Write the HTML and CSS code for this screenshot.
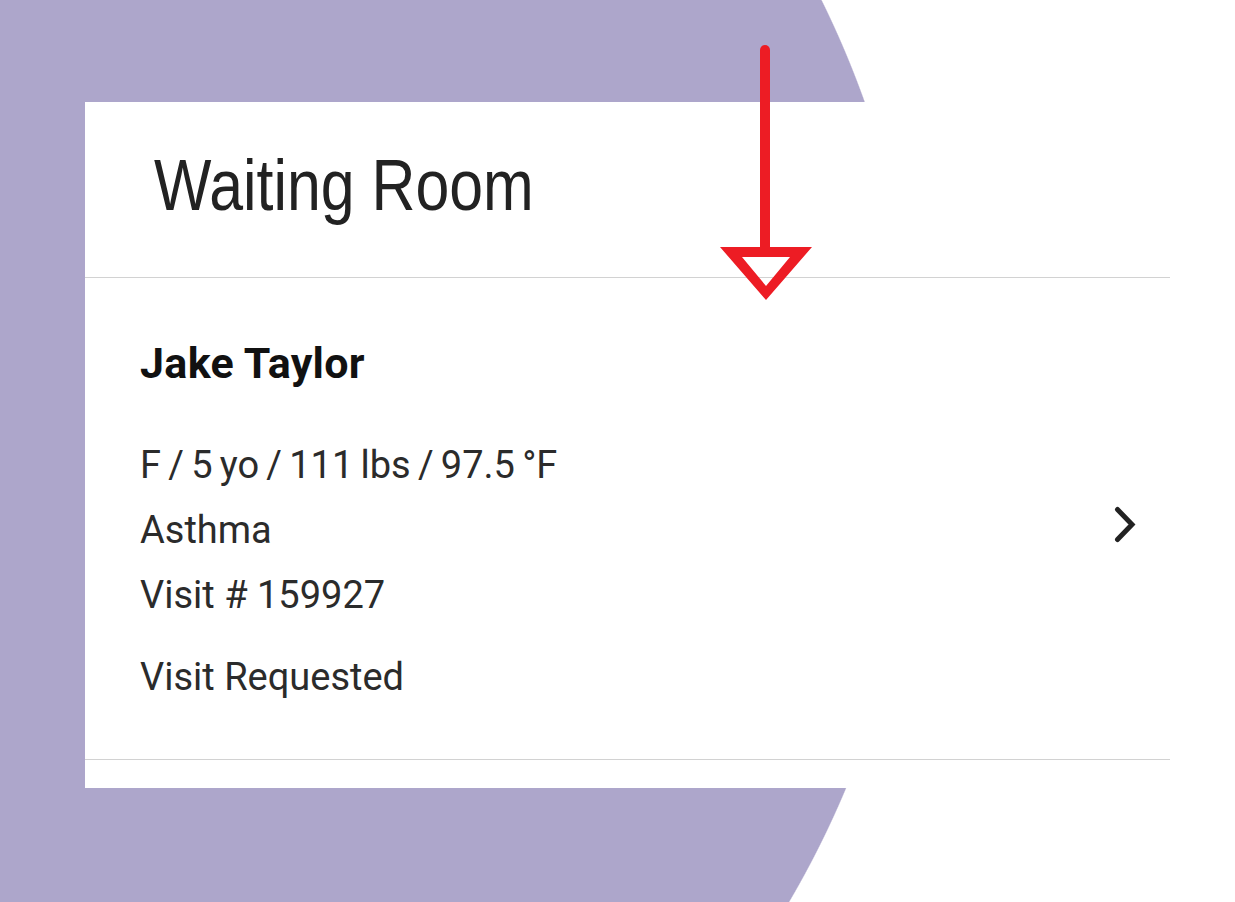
FILE: index.html
```html
<!DOCTYPE html>
<html lang="en">
<head>
<meta charset="utf-8">
<title>Waiting Room</title>
<link rel="stylesheet" href="styles.css">
</head>
<body>
<div class="card">
  <div class="card-header">
    <h1 class="title">Waiting Room</h1>
  </div>
  <div class="list">
    <div class="row">
      <div class="info">
        <div class="name">Jake Taylor</div>
        <div class="line first">F / 5 yo / 111 lbs / 97.5 °F</div>
        <div class="line">Asthma</div>
        <div class="line">Visit # 159927</div>
        <div class="line status">Visit Requested</div>
      </div>
      <svg class="chevron" width="22" height="37" viewBox="0 0 22 37">
        <polyline points="3.5,3.5 18,18.5 3.5,33.5" fill="none" stroke="#222" stroke-width="5" stroke-linecap="round" stroke-linejoin="miter"/>
      </svg>
    </div>
  </div>
</div>
<svg class="arrow" width="100" height="265" viewBox="0 0 100 265">
  <line x1="50" y1="10" x2="50" y2="208" stroke="#ed1c24" stroke-width="10" stroke-linecap="round"/>
  <path d="M5 207 L97 207 L51 260 Z M27 217 L51 246 L75 217 Z" fill="#ed1c24" fill-rule="evenodd"/>
</svg>
</body>
</html>
```

FILE: styles.css
```css
html, body {
  margin: 0;
  padding: 0;
}

body {
  width: 1235px;
  height: 902px;
  overflow: hidden;
  position: relative;
  background: radial-gradient(circle 950px at -30px 421px, #ada6cb 949.3px, #ffffff 950.5px);
  font-family: Roboto, "Liberation Sans", Arial, sans-serif;
}

.card {
  margin: 102px 0 0 85px;
  width: 1150px;
  height: 686px;
  background: #ffffff;
  box-sizing: border-box;
  padding-right: 65px;
}

.card-header {
  height: 176px;
  box-sizing: border-box;
  padding: 43px 0 0 69px;
  border-bottom: 1px solid #d2d2d2;
}

.title {
  margin: 0;
  font-family: "Liberation Sans", Arial, sans-serif;
  font-weight: 400;
  font-size: 72px;
  line-height: 80px;
  color: #222222;
  white-space: nowrap;
  transform: scaleX(0.845);
  transform-origin: left center;
}

.list {
  border-bottom: 1px solid #d2d2d2;
}

.row {
  display: flex;
  align-items: center;
  justify-content: space-between;
  padding: 60px 35px 49px 55px;
}

.name {
  font-weight: 700;
  font-size: 43px;
  line-height: 50px;
  letter-spacing: 0.3px;
  color: #111111;
}

.line {
  font-size: 38px;
  line-height: 65px;
  color: #2b2b2b;
}

.line.first {
  margin-top: 45px;
  word-spacing: -2.2px;
}

.line.status {
  margin-top: 17px;
}

.chevron {
  display: block;
  margin-right: -1px;
}

.arrow {
  position: absolute;
  left: 715px;
  top: 40px;
}
```
